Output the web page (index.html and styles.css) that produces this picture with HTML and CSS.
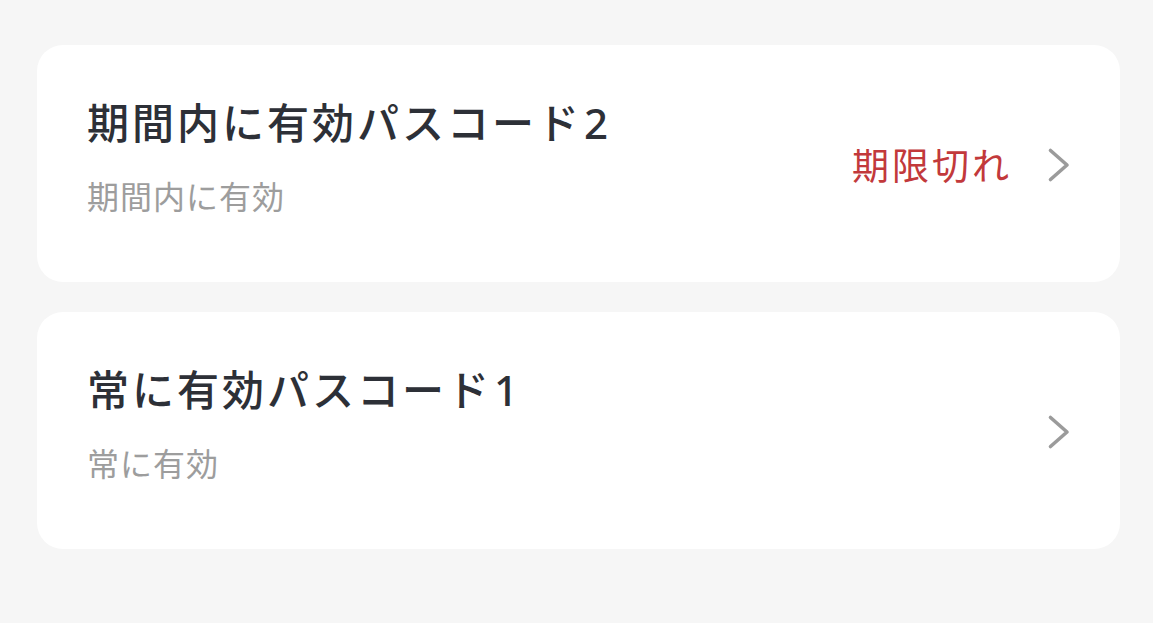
FILE: index.html
```html
<!DOCTYPE html>
<html lang="ja">
<head>
<meta charset="utf-8">
<link rel="stylesheet" href="styles.css">
</head>
<body>
<div class="list">
  <div class="card">
    <div class="info">
      <div class="title">期間内に有効パスコード<span class="num">2</span></div>
      <div class="sub">期間内に有効</div>
    </div>
    <div class="side">
      <span class="status">期限切れ</span>
      <svg class="chev" width="24" height="36" viewBox="0 0 24 36"><polyline points="3.5,3.5 20,18 3.5,32.5" fill="none" stroke="#9b9b9b" stroke-width="3.6" stroke-linecap="round" stroke-linejoin="round"/></svg>
    </div>
  </div>
  <div class="card">
    <div class="info">
      <div class="title">常に有効パスコード<span class="num">1</span></div>
      <div class="sub">常に有効</div>
    </div>
    <div class="side">
      <svg class="chev" width="24" height="36" viewBox="0 0 24 36"><polyline points="3.5,3.5 20,18 3.5,32.5" fill="none" stroke="#9b9b9b" stroke-width="3.6" stroke-linecap="round" stroke-linejoin="round"/></svg>
    </div>
  </div>
</div>
</body>
</html>
```
FILE: styles.css
```css
html, body {
  margin: 0;
  padding: 0;
  background: #f6f6f6;
  font-family: "Noto Sans CJK JP", "Noto Sans", sans-serif;
}
.list {
  display: flex;
  flex-direction: column;
  gap: 30px;
  padding: 45px 33px 0 37px;
}
.card {
  background: #ffffff;
  border-radius: 26px;
  height: 237px;
  box-sizing: border-box;
  padding: 0 49px 0 50px;
  display: flex;
  align-items: center;
  justify-content: space-between;
}
.info {
  display: flex;
  flex-direction: column;
  margin-bottom: 15px;
}
.title {
  font-size: 42px;
  line-height: 48px;
  color: #2d3037;
  font-weight: 500;
  letter-spacing: 3px;
}
.num {
  margin-left: 2px;
  font-size: 42px;
  font-family: "Noto Sans", sans-serif;
  letter-spacing: 0;
}
.sub {
  margin-top: 28px;
  font-size: 32px;
  line-height: 40px;
  color: #9d9d9d;
  letter-spacing: 1px;
}
.side {
  display: flex;
  align-items: center;
  gap: 35px;
}
.status {
  font-size: 37px;
  line-height: 44px;
  color: #c2393b;
  letter-spacing: 3px;
}
.chev {
  display: block;
  margin-top: 3px;
}
```
